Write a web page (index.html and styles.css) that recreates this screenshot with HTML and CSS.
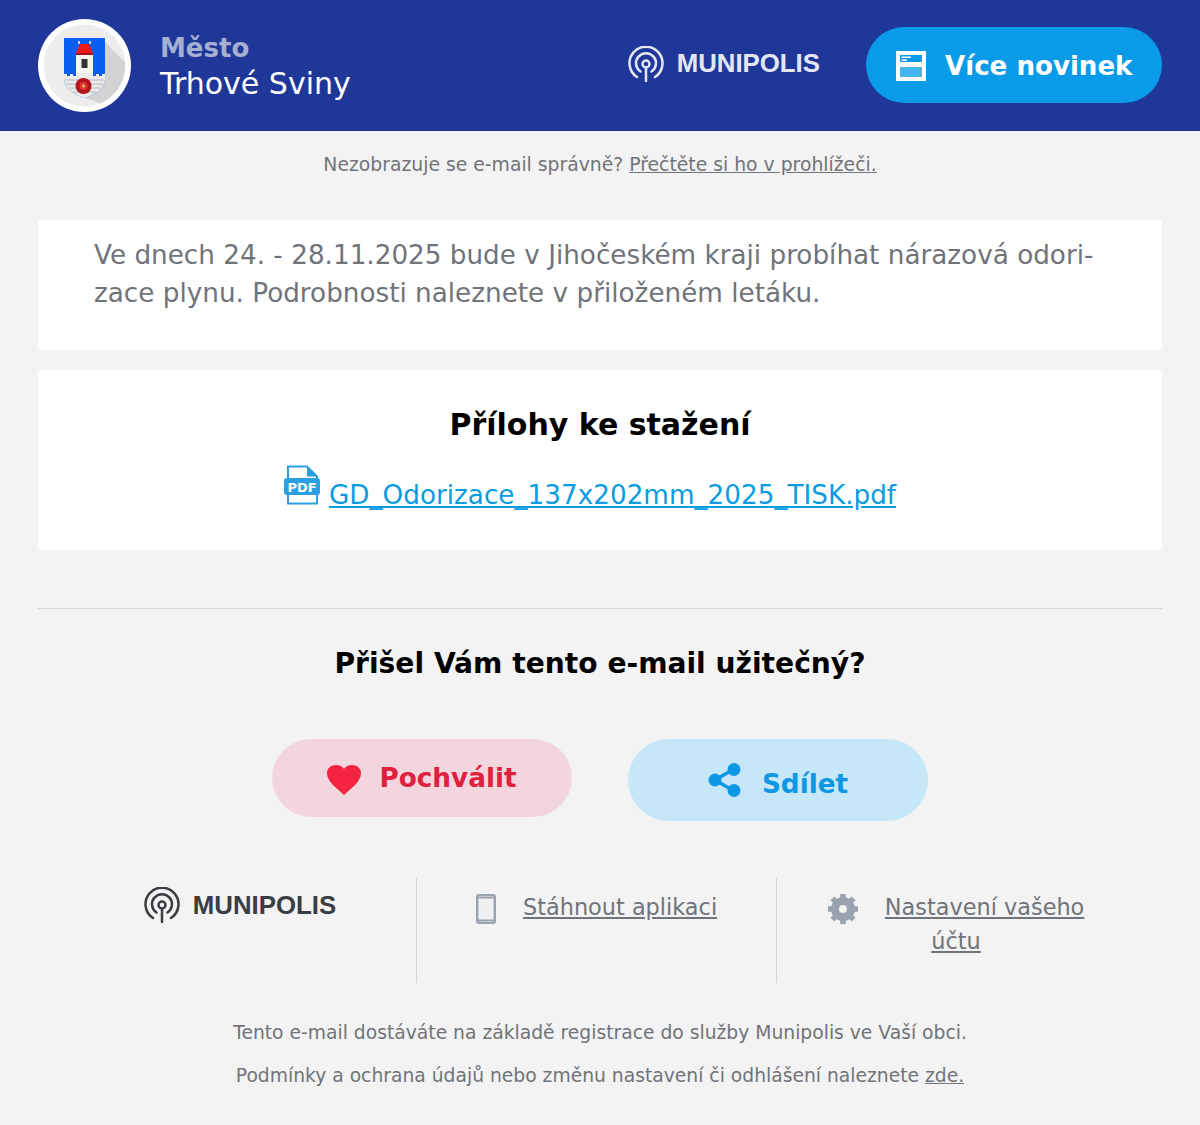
FILE: index.html
```html
<!DOCTYPE html>
<html lang="cs">
<head>
    <meta charset="UTF-8">
    <meta name="viewport" content="width=device-width, initial-scale=1.0">
    <title>Město Trhové Sviny | Munipolis</title>
    <link rel="stylesheet" href="styles.css">
</head>
<body>
    <header class="top">
        <div class="crest">
            <svg viewBox="0 0 93 93" width="93" height="93">
                <circle cx="46.500" cy="46.500" r="46.500" fill="#fff"/>
                <circle cx="46.500" cy="46.500" r="41" fill="#ededed"/>
                <path d="M67 23 L87 43 A41 41 0 0 1 62 84.500 L46 78 L26 60 Z" fill="#d3d3d3"/>
                <path d="M26 19 H67 V60 Q67 72 46.500 79 Q26 72 26 60 Z" fill="#0b5ff0"/>
                <path d="M26 59 V55 H29 V57 H32 V55 H35 V57 H38 V52 H55 V57 H58 V55 H61 V57 H64 V55 H67 V60 Q67 72 46.500 79 Q26 72 26 60 Z" fill="#ececec"/>
                <path d="M27 61 H66 M28 65 H65 M31 69 H62 M35 73 H58" stroke="#b5b5b5" stroke-width="1"/>
                <rect x="38" y="36" width="17" height="18" fill="#f6f6f6"/>
                <rect x="43.500" y="40" width="6" height="9" fill="#333"/>
                <path d="M40 30 L42 25 H51 L53 30 L55 34 H38 Z" fill="#f01818"/>
                <path d="M41 25 V22 M52 25 V22" stroke="#f4f4f4" stroke-width="1.500"/>
                <rect x="38" y="34" width="17" height="2" fill="#a5141a"/>
                <circle cx="45.500" cy="67" r="8" fill="#b3141c"/>
                <circle cx="45.500" cy="67" r="4" fill="#d8343a"/>
                <circle cx="45.500" cy="67" r="1.500" fill="#e8c84a"/>
            </svg>
        </div>
        <div class="town">
            <div class="town-kind">Město</div>
            <div class="town-name">Trhové Sviny</div>
        </div>
        <div class="brand brand-light">
            <svg class="brand-mark" viewBox="0 0 36 36" width="36" height="36">
                <use href="#signal"/>
            </svg>
            <span class="brand-name">MUNIPOLIS</span>
        </div>
        <a class="more" href="#">
            <svg viewBox="0 0 30 30" width="30" height="30">
                <path fill-rule="evenodd" fill="#fff" d="M0 0H30V30H0Z M4 16V26H26V16Z M4 4V11H26V4Z"/>
                <path fill="#fff" d="M5.500 5.500H15V7H5.500Z M5.500 8.500H11V10H5.500Z"/>
                <rect x="4" y="16" width="22" height="10" fill="#7fcbf3" opacity="0.5"/>
            </svg>
            <span>Více novinek</span>
        </a>
    </header>

    <p class="notice">Nezobrazuje se e-mail správně? <a href="#">Přečtěte si ho v prohlížeči.</a></p>

    <main class="content">
        <section class="card card-message">
            <p>Ve dnech 24. - 28.11.2025 bude v Jihočeském kraji probíhat nárazová odori-<br>zace plynu. Podrobnosti naleznete v přiloženém letáku.</p>
        </section>

        <section class="card card-files">
            <h2>Přílohy ke stažení</h2>
            <div class="file">
                <svg class="file-icon" viewBox="0 0 36 40" width="36" height="40">
                    <path d="M4 16V1.500H23L33 11.500V16 M4 30V38.500H33V30" fill="#fff" stroke="#2aa0e2" stroke-width="2"/>
                    <path d="M23 1.500V11.500H33Z" fill="#2aa0e2"/>
                    <rect x="0" y="13" width="36" height="17" rx="3" fill="#2aa0e2"/>
                    <text x="18" y="26.500" text-anchor="middle" class="file-icon-text">PDF</text>
                </svg>
                <a href="#">GD_Odorizace_137x202mm_2025_TISK.pdf</a>
            </div>
        </section>

        <hr class="rule">

        <h3 class="ask">Přišel Vám tento e-mail užitečný?</h3>

        <div class="actions">
            <a class="action action-praise" href="#">
                <svg viewBox="0 0 34 30" width="34" height="30">
                    <path d="M17 30 C11 24 0 17 0 8.500 C0 3 4 0 9 0 C12.500 0 15.500 1.500 17 4 C18.500 1.500 21.500 0 25 0 C30 0 34 3 34 8.500 C34 17 23 24 17 30Z" fill="#f4233f"/>
                </svg>
                <span>Pochválit</span>
            </a>
            <a class="action action-share" href="#">
                <svg viewBox="0 0 34 34" width="34" height="34">
                    <path d="M7 17L26 6M7 17L26 28" stroke="#0e97e4" stroke-width="3.500"/>
                    <circle cx="7" cy="17" r="6.500" fill="#0e97e4"/>
                    <circle cx="26" cy="6.500" r="6.500" fill="#0e97e4"/>
                    <circle cx="26" cy="27.500" r="6.500" fill="#0e97e4"/>
                </svg>
                <span>Sdílet</span>
            </a>
        </div>

        <div class="links">
            <div class="links-col links-brand">
                <div class="brand brand-dark">
                    <svg class="brand-mark" viewBox="0 0 36 36" width="36" height="36">
                        <use href="#signal"/>
                    </svg>
                    <span class="brand-name">MUNIPOLIS</span>
                </div>
            </div>
            <div class="links-col">
                <svg class="links-icon" viewBox="0 0 20 30" width="20" height="30">
                    <rect x="1.200" y="1.200" width="17.600" height="27.600" rx="1.500" fill="#eef0f2" stroke="#9aa3ad" stroke-width="2.400"/>
                    <rect x="2" y="3" width="16" height="1.500" fill="#9aa3ad"/>
                    <rect x="2" y="25.500" width="16" height="1.500" fill="#9aa3ad"/>
                </svg>
                <a href="#">Stáhnout aplikaci</a>
            </div>
            <div class="links-col links-last">
                <svg class="links-icon" viewBox="0 0 30 30" width="30" height="30">
                    <circle cx="15" cy="15" r="8" fill="none" stroke="#9aa3ad" stroke-width="8"/>
                    <g stroke="#9aa3ad" stroke-width="5.500">
                        <path d="M15 0V6M15 24V30M0 15H6M24 15H30M4.400 4.400L8.600 8.600M21.400 21.400L25.600 25.600M4.400 25.600L8.600 21.400M21.400 8.600L25.600 4.400"/>
                    </g>
                </svg>
                <a href="#">Nastavení vašeho</a><br><a href="#">účtu</a>
            </div>
        </div>

        <footer class="foot">
            <p>Tento e-mail dostáváte na základě registrace do služby Munipolis ve Vaší obci.</p>
            <p>Podmínky a ochrana údajů nebo změnu nastavení či odhlášení naleznete <a href="#">zde.</a></p>
        </footer>
    </main>

    <svg class="defs" width="0" height="0">
        <defs>
            <g id="signal" fill="none" stroke="currentColor" stroke-linecap="round">
                <path stroke-width="2.500" d="M9 31 A16.500 16.500 0 1 1 27 31"/>
                <path stroke-width="2.500" d="M12.500 25.500 A10 10 0 1 1 23.500 25.500"/>
                <circle cx="18" cy="18" r="3.500" stroke-width="2.500"/>
                <path stroke-width="2.500" d="M18 22V35"/>
            </g>
        </defs>
    </svg>
</body>
</html>
```

FILE: styles.css
```css
* { box-sizing: border-box; }
body { margin: 0; background: #f3f3f3; color: #707379; font-family: "DejaVu Sans", sans-serif; }
a { color: inherit; }
p { margin: 0; }
.defs { position: absolute; }

.top { display: flex; align-items: center; height: 131px; padding: 0 38px; background: #1e3799; }
.crest { width: 93px; height: 93px; flex: none; }
.crest svg { display: block; }
.town { margin-left: 29px; padding-top: 4px; flex: 1; }
.town-kind { font-size: 26px; line-height: 32px; font-weight: bold; color: #a5afcf; }
.town-name { font-size: 30px; line-height: 40px; color: #fff; }
.brand { display: flex; align-items: center; gap: 13px; }
.brand-name { font-family: "Liberation Sans", sans-serif; font-weight: bold; font-size: 25.800px; }
.brand-light { color: #e3e7f4; margin: 0 46px 4px 0; }
.brand-dark { color: #3a3d42; }
.more { display: flex; align-items: center; gap: 19px; width: 296px; height: 76px; margin-bottom: 1px; padding: 2px 0 0 30px; border-radius: 38px; background: #0a9be8; color: #fff; font-size: 26.100px; font-weight: bold; text-decoration: none; }

.notice { padding-top: 22px; text-align: center; font-size: 18.800px; line-height: 24px; }
.content { padding: 43px 38px 0; }
.card { background: #fff; border-radius: 3px; margin-bottom: 20px; }
.card-message { height: 130px; padding: 16px 56px 0; font-size: 26.250px; line-height: 38px; }
.card-files { height: 180px; padding-top: 36px; text-align: center; }
.card-files h2 { margin: 0; font-size: 30px; line-height: 38px; color: #000; }
.file { display: flex; justify-content: center; align-items: flex-start; gap: 9px; margin-top: 21px; padding-right: 20px; font-size: 26.250px; line-height: 38px; color: #0a9be0; }
.file-icon { flex: none; }
.file a { margin-top: 11px; }
.file-icon-text { font-family: "DejaVu Sans", sans-serif; font-size: 13px; font-weight: bold; fill: #fff; }

.rule { height: 1px; margin: 58px 0 0; border: 0; background: #d4d5d7; }
.ask { margin: 36px 0 0; text-align: center; font-size: 28.150px; line-height: 38px; color: #000; }
.actions { display: flex; justify-content: center; align-items: flex-start; gap: 56px; margin-top: 56px; }
.action { display: flex; justify-content: center; align-items: center; gap: 18px; width: 300px; border-radius: 41px; font-size: 26.300px; font-weight: bold; text-decoration: none; }
.action-praise { height: 78px; background: #f3d6dd; color: #e0203f; }
.action-praise svg { margin-top: 4px; }
.action-share { height: 82px; gap: 20px; background: #c6e7f8; color: #0e97e4; }
.action-share span { padding-top: 8px; }

.links { display: flex; margin-top: 57px; height: 105px; }
.links-col { width: 360px; padding-top: 12px; border-right: 1px solid #d4d5d7; font-size: 22.400px; line-height: 34px; text-align: center; }
.links-brand { display: flex; justify-content: center; align-items: flex-start; width: 379px; padding: 9px 0 0 26px; }
.links-last { width: 358px; border-right: 0; }
.links-icon { margin-right: 20px; vertical-align: middle; }

.foot { margin-top: 37px; text-align: center; font-size: 18.730px; line-height: 26px; }
.foot p + p { margin-top: 17px; }
```
